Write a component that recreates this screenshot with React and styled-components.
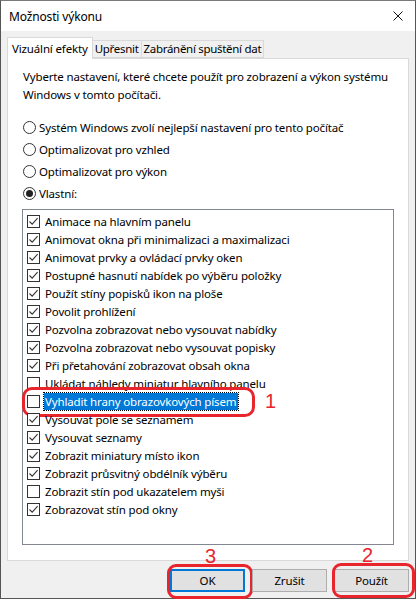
import React from "react";
import styled, { createGlobalStyle } from "styled-components";

const GlobalStyle = createGlobalStyle`
  html, body {
    margin: 0;
    padding: 0;
    background: #ffffff;
  }
  body {
    font-family: "Noto Sans", "Open Sans", sans-serif;
    font-size: 11.5px;
    letter-spacing: -0.15px;
    color: #000;
  }
`;

const Window = styled.div`
  position: relative;
  width: 414px;
  height: 597px;
  border: 1px solid #555555;
  border-top-color: #7a7a7a;
  display: flex;
  flex-direction: column;
  background: #f0f0f0;
`;

const TitleBar = styled.div`
  height: 30px;
  flex: none;
  background: #ffffff;
  display: flex;
  align-items: center;
  justify-content: space-between;
  padding: 0 10px 0 8px;
`;

const Title = styled.span`
  font-size: 12px;
  color: #000;
`;

const CloseIcon = styled.svg`
  width: 10px;
  height: 10px;
  margin-right: 2px;
`;

const Body = styled.div`
  flex: 1;
  display: flex;
  flex-direction: column;
  padding: 6px 6px 0 6px;
`;

const Tabs = styled.div`
  display: flex;
  align-items: flex-end;
  height: 21px;
  position: relative;
  z-index: 1;
`;

const Tab = styled.div`
  box-sizing: border-box;
  height: ${(p) => (p.$active ? "22px" : "18px")};
  margin-bottom: ${(p) => (p.$active ? "-1px" : "0")};
  padding: 0 ${(p) => (p.$active ? "4px" : "2px")};
  background: ${(p) => (p.$active ? "#ffffff" : "#f0f0f0")};
  border: 1px solid #d9d9d9;
  border-bottom: ${(p) => (p.$active ? "none" : "1px solid #d9d9d9")};
  margin-left: ${(p) => (p.$first ? "0" : "-1px")};
  display: flex;
  align-items: center;
  white-space: nowrap;
  line-height: 16px;
  letter-spacing: ${(p) => (p.$active ? "-0.15px" : "-0.3px")};
`;

const Panel = styled.div`
  box-sizing: border-box;
  height: 503px;
  background: #ffffff;
  border: 1px solid #d9d9d9;
  padding: 9px 14px 0 14px;
  display: flex;
  flex-direction: column;
`;

const Description = styled.p`
  margin: 0 0 0 1px;
  line-height: 18px;
`;

const Radios = styled.div`
  display: flex;
  flex-direction: column;
  gap: 5px;
  margin-top: 15px;
`;

const RadioRow = styled.label`
  display: flex;
  align-items: center;
  gap: 3px;
  height: 17px;
  padding-left: 1px;
`;

const RadioCircle = styled.span`
  box-sizing: border-box;
  width: 13px;
  height: 13px;
  border: 1px solid #333333;
  border-radius: 50%;
  display: flex;
  align-items: center;
  justify-content: center;
  flex: none;
  &::after {
    content: "";
    width: 7px;
    height: 7px;
    border-radius: 50%;
    background: ${(p) => (p.$checked ? "#222222" : "transparent")};
  }
`;

const ListBox = styled.div`
  box-sizing: border-box;
  margin-top: 7px;
  width: 372px;
  height: 336px;
  border: 1px solid #828790;
  padding: 2px 0 0 4px;
  display: flex;
  flex-direction: column;
`;

const Item = styled.div`
  position: relative;
  height: 18px;
  display: flex;
  align-items: center;
  gap: 4px;
`;

const Box = styled.span`
  box-sizing: border-box;
  width: 13px;
  height: 13px;
  border: 1px solid #333333;
  background: #ffffff;
  flex: none;
  display: flex;
  align-items: center;
  justify-content: center;
`;

const ItemText = styled.span`
  white-space: nowrap;
  padding: 0 2px 0 1px;
  line-height: 17px;
  background: ${(p) => (p.$selected ? "#0078d7" : "transparent")};
  color: ${(p) => (p.$selected ? "#ffffff" : "#000000")};
  outline: ${(p) => (p.$selected ? "1px dotted #000" : "none")};
`;

const Ring = styled.span`
  position: absolute;
  border: 3px solid #e8242c;
  border-radius: ${(p) => p.$radius || "10px"};
  pointer-events: none;
`;

const Marker = styled.span`
  position: absolute;
  color: #e8242c;
  font-family: "Liberation Sans", "Noto Sans", sans-serif;
  font-size: 20px;
  letter-spacing: 0;
  line-height: 1;
`;

const Footer = styled.div`
  display: flex;
  justify-content: flex-end;
  gap: 7px;
  padding: 8px 0 0 0;
`;

const Button = styled.button`
  position: relative;
  box-sizing: border-box;
  width: 75px;
  height: 23px;
  background: #e1e1e1;
  border: ${(p) => (p.$default ? "2px solid #0078d7" : "1px solid #adadad")};
  font-family: "Noto Sans", "Open Sans", sans-serif;
  font-size: 11.5px;
  font-weight: 400;
  letter-spacing: -0.15px;
  color: #000;
  padding: 0;
`;

const Check = () => (
  <svg width="11" height="11" viewBox="0 0 11 11">
    <path d="M1.5 5.5 L4.2 8.2 L9.6 2.2" fill="none" stroke="#333" strokeWidth="1.1" />
  </svg>
);

const items = [
  ["Animace na hlavním panelu", true],
  ["Animovat okna při minimalizaci a maximalizaci", true],
  ["Animovat prvky a ovládací prvky oken", true],
  ["Postupné hasnutí nabídek po výběru položky", true],
  ["Použít stíny popisků ikon na ploše", true],
  ["Povolit prohlížení", true],
  ["Pozvolna zobrazovat nebo vysouvat nabídky", true],
  ["Pozvolna zobrazovat nebo vysouvat popisky", true],
  ["Při přetahování zobrazovat obsah okna", true],
  ["Ukládat náhledy miniatur hlavního panelu", false],
  ["Vyhladit hrany obrazovkových písem", false, true],
  ["Vysouvat pole se seznamem", true],
  ["Vysouvat seznamy", true],
  ["Zobrazit miniatury místo ikon", true],
  ["Zobrazit průsvitný obdélník výběru", true],
  ["Zobrazit stín pod ukazatelem myši", false],
  ["Zobrazovat stín pod okny", true],
];

const radios = [
  ["Systém Windows zvolí nejlepší nastavení pro tento počítač", false],
  ["Optimalizovat pro vzhled", false],
  ["Optimalizovat pro výkon", false],
  ["Vlastní:", true],
];

const App = () => {
  return (
    <>
      <GlobalStyle />
      <Window>
        <TitleBar>
          <Title>Možnosti výkonu</Title>
          <CloseIcon viewBox="0 0 10 10">
            <path d="M0.5 0.5 L9.5 9.5 M9.5 0.5 L0.5 9.5" stroke="#111" strokeWidth="1" />
          </CloseIcon>
        </TitleBar>
        <Body>
          <Tabs>
            <Tab $active $first>Vizuální efekty</Tab>
            <Tab>Upřesnit</Tab>
            <Tab>Zabránění spuštění dat</Tab>
          </Tabs>
          <Panel>
            <Description>
              Vyberte nastavení, které chcete použít pro zobrazení a výkon systému
              <br />
              Windows v tomto počítači.
            </Description>
            <Radios>
              {radios.map(([label, checked]) => (
                <RadioRow key={label}>
                  <RadioCircle $checked={checked} />
                  {label}
                </RadioRow>
              ))}
            </Radios>
            <ListBox>
              {items.map(([label, checked, selected]) => (
                <Item key={label}>
                  <Box>{checked && <Check />}</Box>
                  <ItemText $selected={selected}>{label}</ItemText>
                  {selected && (
                    <>
                      <Ring style={{ left: -5, top: -5, width: 227, height: 24 }} />
                      <Marker style={{ left: 238, top: -1 }}>1</Marker>
                    </>
                  )}
                </Item>
              ))}
            </ListBox>
          </Panel>
          <Footer>
            <Button $default>
              OK
              <Ring $radius="9px" style={{ left: -5, top: -7, width: 80, height: 29 }} />
              <Marker style={{ left: 33, top: -25 }}>3</Marker>
            </Button>
            <Button>Zrušit</Button>
            <Button>
              Použít
              <Ring $radius="9px" style={{ left: -3, top: -7, width: 77, height: 29 }} />
              <Marker style={{ left: 27, top: -25 }}>2</Marker>
            </Button>
          </Footer>
        </Body>
      </Window>
    </>
  );
};

export default App;
